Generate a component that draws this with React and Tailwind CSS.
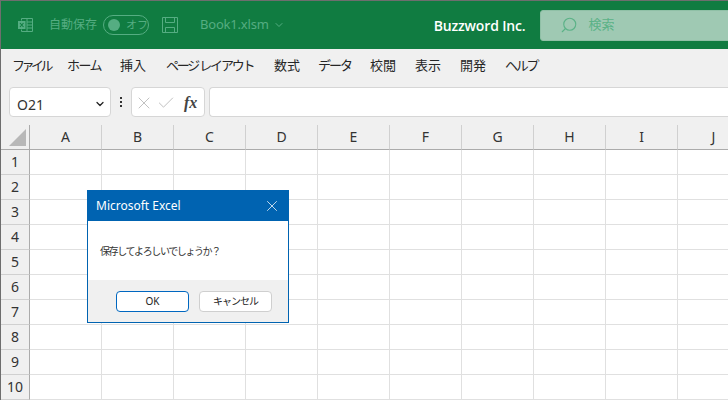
import React from 'react';
import { X, Check, ChevronDown, Search } from 'lucide-react';

const tabs = [
  ['ファイル', 'w-[55px] tracking-[-3.5px]'],
  ['ホーム', 'w-[53px] tracking-[-1.5px]'],
  ['挿入', 'w-[46px]'],
  ['ページ レイアウト', 'w-[108px] tracking-[-2.2px]'],
  ['数式', 'w-[44px]'],
  ['データ', 'w-[52px] tracking-[-2px]'],
  ['校閲', 'w-[45px]'],
  ['表示', 'w-[45px]'],
  ['開発', 'w-[45px]'],
  ['ヘルプ', 'w-[44px] tracking-[-2.3px]'],
];
const cols = ['A', 'B', 'C', 'D', 'E', 'F', 'G', 'H', 'I', 'J'];
const rows = [1, 2, 3, 4, 5, 6, 7, 8, 9, 10];
const ui = "font-['Noto_Sans','Noto_Sans_CJK_JP',sans-serif]";

function ExcelIcon() {
  return (
    <svg width="16" height="16" viewBox="0 0 16 16" fill="none" stroke="#55ad82" strokeWidth="1" className="shrink-0">
      <path d="M4.500 3.500v-2h11v13h-11v-2M10 1.500v13M10 5h5.500M10 8h5.500M10 11h5.500" />
      <rect x="1" y="4" width="7.500" height="8" fill="#55ad82" stroke="none" />
      <path d="M3 6l3.500 4M6.500 6l-3.500 4" stroke="#107c41" strokeWidth="1.100" />
    </svg>
  );
}

function SaveIcon() {
  return (
    <svg width="16" height="16" viewBox="0 0 16 16" fill="none" stroke="#55ad82" strokeWidth="1" className="shrink-0">
      <path d="M.5.5h15v15H.5zM3.500.5v5h9v-5M3.500 15.500v-5h9v5" />
    </svg>
  );
}

export default function App() {
  return (
    <div className={`relative w-[728px] h-[400px] overflow-hidden bg-white border-t border-l border-[#6e6e6e] ${ui}`}>
      {/* Title bar */}
      <header className="flex items-center h-[48px] bg-[#107c41] text-[#55ad82] whitespace-nowrap">
        <div className="ml-[16px]"><ExcelIcon /></div>
        <span className="ml-[16px] w-[48px] shrink-0 text-[12px]">自動保存</span>
        <div className="ml-[6px] shrink-0 flex items-center w-[46px] h-[20px] rounded-full border border-[#55ad82]">
          <span className="ml-[4px] w-[12px] h-[12px] rounded-full bg-[#55ad82]" />
          <span className="ml-[6px] text-[11px]">オフ</span>
        </div>
        <div className="ml-[13px]"><SaveIcon /></div>
        <span className="ml-[22px] shrink-0 text-[13px] tracking-[-0.2px]">Book1.xlsm</span>
        <ChevronDown size={12} className="ml-[4px] shrink-0" />
        <span className="ml-[149px] shrink-0 text-[14px] font-semibold text-white tracking-[-0.15px] font-['Open_Sans',sans-serif]">Buzzword Inc.</span>
        <div className="ml-[14px] shrink-0 flex items-center w-[200px] h-[31px] rounded-[3px] bg-[#9fc9b3] text-[#5bb287] border border-[#8fc0a6]">
          <Search size={18} strokeWidth={1.500} className="ml-[19px] -scale-x-100" />
          <span className="ml-[11px] text-[13px]">検索</span>
        </div>
      </header>

      {/* Ribbon tabs */}
      <nav className="flex items-center h-[38px] bg-[#f0f0f0] pl-[11px] pb-[4px] text-[13px] text-[#262626] whitespace-pre">
        {tabs.map(([t, w]) => (
          <span key={t} className={`${w} shrink-0`}>{t}</span>
        ))}
      </nav>

      {/* Formula bar */}
      <div className="flex items-start h-[38px] bg-[#f0f0f0] pl-[8px]">
        <div className="flex items-center justify-between w-[102px] h-[30px] pl-[7px] pr-[4px] pt-[4px] bg-white border border-[#d6d6d6] rounded-[4px] text-[14px] text-[#333]">
          <span>O21</span>
          <ChevronDown size={12} strokeWidth={2.500} className="text-[#222]" />
        </div>
        <div className="flex flex-col gap-[2px] mx-[9px] mt-[10px]">
          <span className="w-[2px] h-[2px] bg-[#333]" />
          <span className="w-[2px] h-[2px] bg-[#333]" />
          <span className="w-[2px] h-[2px] bg-[#333]" />
        </div>
        <div className="flex items-center w-[74px] h-[30px] pt-[2px] bg-white border border-[#d6d6d6] rounded-[4px] pl-[2px]">
          <X size={20} strokeWidth={1} className="text-[#b4b4b4]" />
          <Check size={20} strokeWidth={1} className="ml-[2px] text-[#b4b4b4]" />
          <span className="ml-[8px] text-[16px] italic font-bold text-[#444] font-['Liberation_Serif',serif]">fx</span>
        </div>
        <div className="ml-[4px] flex-1 h-[30px] bg-white border border-[#d6d6d6] rounded-l-[4px] border-r-0" />
      </div>

      {/* Sheet */}
      <div className="grid grid-cols-[29px_repeat(10,72px)] grid-rows-[25px_repeat(10,25px)] bg-white">
        <div className="relative bg-[#f0f0f0] border-r border-b border-[#ababab]">
          <div className="absolute right-[3px] bottom-[3px] w-0 h-0 border-l-[17px] border-l-transparent border-b-[17px] border-b-[#b8b8b8]" />
        </div>
        {cols.map((c) => (
          <div key={c} className="flex items-center justify-center pb-[2px] bg-[#f0f0f0] border-r border-b border-r-[#d0d0d0] border-b-[#ababab] text-[14px] text-[#333]">{c}</div>
        ))}
        {rows.map((r) => (
          <React.Fragment key={r}>
            <div className="flex items-center justify-center pb-[1px] bg-[#f0f0f0] border-r border-b border-r-[#ababab] border-b-[#d0d0d0] text-[14px] text-[#333]">{r}</div>
            {cols.map((c) => (
              <div key={c} className="border-r border-b border-[#e0e0e0]" />
            ))}
          </React.Fragment>
        ))}
      </div>

      {/* Dialog */}
      <div className="absolute left-[86px] top-[189px] w-[202px] h-[133px] flex flex-col bg-white border border-[#0063b1]">
        <div className="flex items-center justify-between h-[30px] bg-[#0063b1] text-white pl-[8px] pr-[7px]">
          <span className="text-[12px]">Microsoft Excel</span>
          <X size={18} strokeWidth={1} />
        </div>
        <div className="flex-1 flex items-center pl-[12px] pt-[2px] text-[10px] tracking-[-1.4px] text-[#333]">保存してよろしいでしょうか？</div>
        <div className="flex items-center h-[42px] bg-[#f0f0f0] pl-[28px] gap-[10px] text-[10px] text-[#222]">
          <button className="w-[73px] h-[21px] bg-white border border-[#0067c0] rounded-[4px]">OK</button>
          <button className="w-[73px] h-[21px] bg-white border border-[#cfcfcf] rounded-[4px] tracking-[-1px]">キャンセル</button>
        </div>
      </div>
    </div>
  );
}
